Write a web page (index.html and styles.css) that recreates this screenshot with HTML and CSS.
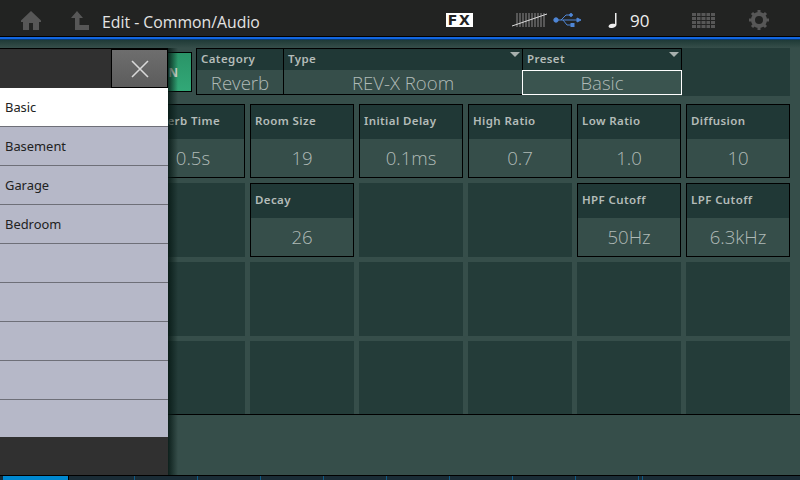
FILE: index.html
```html
<!DOCTYPE html>
<html>
<head>
  <title>Edit - Common/Audio</title>
  <link rel="stylesheet" href="styles.css">
</head>
<body>
  <div class="screen">
    <div class="header">
      <svg class="icon-home" width="20" height="20" viewBox="0 0 20 20"><path d="M10 1 L20 10.5 V12 H18 V20 H12 V13 H8 V20 H2 V12 H0 V10.5 Z" fill="#575757"/></svg>
      <svg class="icon-back" width="18" height="19" viewBox="0 0 18 19"><path d="M6 0 L12 7 H8.5 V14 H18 V19 H4 V7 H0 Z" fill="#575757"/></svg>
      <span class="title">Edit - Common/Audio</span>
      <span class="fx">FX</span>
      <svg class="icon-keys" width="36" height="16" viewBox="0 0 36 16">
        <path d="M5 1V15M8 1V15M11 1V15M14 1V15M17 1V15M20 1V15M23 1V15M26 1V15M29 1V15M32 1V15" stroke="#575757" stroke-width="2"/>
        <path d="M0 14 L35 2" stroke="#ddd" stroke-width="1"/>
      </svg>
      <svg class="icon-usb" width="29" height="14" viewBox="0 0 29 14">
        <g fill="#4f86d6" stroke="#4f86d6">
          <circle cx="3" cy="7" r="2.2"/>
          <path d="M3 7H25" fill="none"/>
          <path d="M8 7 L13 2 H17 M10 7 L14 12 H18" fill="none"/>
          <circle cx="18" cy="2" r="1.4"/>
          <rect x="18" y="10.5" width="3" height="3"/>
          <path d="M24 5 L28 7 L24 9 Z"/>
        </g>
      </svg>
      <svg class="icon-note" width="9" height="15" viewBox="0 0 9 15"><path d="M7 0 H8.5 V11.5 C8.5 13.5 6 15 3 15 C0.5 15 0 13.5 1 12.3 C2.2 11 5 10.6 7 11 Z" fill="#eee"/></svg>
      <span class="tempo">90</span>
      <svg class="icon-grid" width="23" height="15" viewBox="0 0 23 15">
        <path d="M0 1.5H23M0 5.5H23M0 9.5H23M0 13.5H23" stroke="#575757" stroke-width="3"/>
        <path d="M4.5 0V15M9 0V15M14 0V15M18.5 0V15" stroke="#222" stroke-width="1"/>
      </svg>
      <svg class="icon-gear" width="20" height="20" viewBox="0 0 20 20">
        <circle cx="10" cy="10" r="6" fill="none" stroke="#575757" stroke-width="4"/>
        <path d="M10 0V20M0 10H20M3 3L17 17M17 3L3 17" stroke="#575757" stroke-width="3" stroke-dasharray="3 14 3"/>
      </svg>
    </div>
    <div class="accent"></div>

    <div class="main">
      <div class="top-row">
        <div class="on-wrap"><button class="on-btn">ON</button></div>
        <div class="field field-category">
          <div class="label">Category</div>
          <div class="value">Reverb</div>
        </div>
        <div class="field field-type">
          <div class="label">Type<span class="arrow"></span></div>
          <div class="value">REV-X Room</div>
        </div>
        <div class="field field-preset">
          <div class="label">Preset<span class="arrow"></span></div>
          <div class="value selected">Basic</div>
        </div>
        <div class="field-empty"></div>
      </div>

      <div class="grid">
        <div class="cell"><div class="label">Reverb Time</div><div class="value">0.5s</div></div>
        <div class="cell"><div class="label">Room Size</div><div class="value">19</div></div>
        <div class="cell"><div class="label">Initial Delay</div><div class="value">0.1ms</div></div>
        <div class="cell"><div class="label">High Ratio</div><div class="value">0.7</div></div>
        <div class="cell"><div class="label">Low Ratio</div><div class="value">1.0</div></div>
        <div class="cell"><div class="label">Diffusion</div><div class="value">10</div></div>

        <div class="empty"></div>
        <div class="cell"><div class="label">Decay</div><div class="value">26</div></div>
        <div class="empty"></div>
        <div class="empty"></div>
        <div class="cell"><div class="label">HPF Cutoff</div><div class="value">50Hz</div></div>
        <div class="cell"><div class="label">LPF Cutoff</div><div class="value">6.3kHz</div></div>

        <div class="empty"></div><div class="empty"></div><div class="empty"></div>
        <div class="empty"></div><div class="empty"></div><div class="empty"></div>

        <div class="empty"></div><div class="empty"></div><div class="empty"></div>
        <div class="empty"></div><div class="empty"></div><div class="empty"></div>
      </div>

      <div class="strip"></div>
    </div>

    <div class="tabs">
      <div class="tab active"></div>
      <div class="tab"></div><div class="tab"></div><div class="tab"></div><div class="tab"></div>
      <div class="tab"></div><div class="tab"></div><div class="tab"></div><div class="tab"></div>
      <div class="tab"></div><div class="tab tab-small"></div><div class="tab tab-last"></div>
    </div>

    <div class="panel">
      <div class="panel-top">
        <button class="close">
          <svg width="18" height="18" viewBox="0 0 18 18"><path d="M1 1L17 17M17 1L1 17" stroke="#d8d8d8" stroke-width="1.6"/></svg>
        </button>
      </div>
      <ul class="menu">
        <li class="current">Basic</li>
        <li>Basement</li>
        <li>Garage</li>
        <li>Bedroom</li>
        <li></li>
        <li></li>
        <li></li>
        <li></li>
        <li></li>
      </ul>
    </div>
  </div>
</body>
</html>
```

FILE: styles.css
```css
* {
  box-sizing: border-box;
}

html, body {
  margin: 0;
  padding: 0;
}

body {
  width: 800px;
  height: 480px;
  overflow: hidden;
  font-family: "Open Sans", sans-serif;
  background: #364e4a;
}

.screen {
  position: relative;
  width: 800px;
  height: 480px;
  display: flex;
  flex-direction: column;
}

.header {
  display: flex;
  align-items: center;
  height: 37px;
  padding-top: 4px;
  background: #222322;
  border-bottom: 1px solid #000;
  flex-shrink: 0;
}

.icon-home { margin-left: 21px; }
.icon-back { margin-left: 30px; }

.title {
  margin-left: 13px;
  padding-top: 3px;
  width: 344px;
  color: #e4e4e4;
  font-size: 15.8px;
  white-space: nowrap;
}

.fx {
  width: 27px;
  height: 14px;
  background: #fff;
  color: #222;
  font-family: "DejaVu Sans", sans-serif;
  font-weight: bold;
  font-size: 14px;
  line-height: 14px;
  text-align: center;
  letter-spacing: 1.5px;
}

.icon-keys { margin-left: 39px; }
.icon-usb { margin-left: 5px; }
.icon-note { margin-left: 26px; }

.tempo {
  margin-left: 13px;
  width: 20px;
  color: #eee;
  font-size: 17px;
}

.icon-grid { margin-left: 42px; }
.icon-gear { margin-left: 34px; }

.accent {
  height: 3px;
  background: #1266e0;
  border-bottom: 1px solid #0a3a70;
  flex-shrink: 0;
}

.main {
  flex: 1;
  display: flex;
  flex-direction: column;
  background: linear-gradient(#1f3a37, #364e4a 8px);
  padding-top: 8px;
  min-height: 0;
}

.top-row {
  display: flex;
  height: 48px;
  padding-left: 141px;
}

.on-wrap {
  width: 55px;
  padding: 4px 4px 4px 0;
}

.on-btn {
  display: block;
  width: 100%;
  height: 100%;
  padding: 0 0 0 4px;
  background: linear-gradient(#2a9468, #32a877);
  border: 1px solid #000;
  color: #dcebe3;
  font-family: "Noto Sans", sans-serif;
  font-weight: bold;
  font-size: 12px;
}

.field {
  display: flex;
  flex-direction: column;
  height: 47px;
  border: 1px solid #000;
  border-right: 0;
}

.field-category { width: 87px; }
.field-type { width: 239px; }
.field-preset { width: 160px; border-right: 1px solid #000; border-bottom: 0; }

.field-empty {
  width: 108px;
  background: #243c39;
}

.label {
  position: relative;
  flex-shrink: 0;
  background: #203836;
  color: #b4bcb9;
  font-family: "Noto Sans", sans-serif;
  font-weight: 600;
  font-size: 11.5px;
  letter-spacing: 0.4px;
  white-space: nowrap;
  overflow: hidden;
}

.field .label {
  height: 21px;
  line-height: 20px;
  padding-left: 4px;
}

.value {
  flex: 1;
  min-height: 0;
  background: #364e4a;
  color: #b0bab7;
  text-align: center;
  font-size: 18.6px;
  font-weight: 300;
}

.field .value {
  line-height: 25px;
}

.field .value.selected {
  border: 1px solid #fff;
  line-height: 23px;
  background: #3a544f;
  margin-left: -1px;
  margin-right: -1px;
}

.arrow {
  position: absolute;
  right: 2px;
  top: 3px;
  width: 0;
  height: 0;
  border-left: 5px solid transparent;
  border-right: 5px solid transparent;
  border-top: 5px solid #a8b0ae;
}

.grid {
  display: grid;
  grid-template-columns: repeat(6, 104px);
  grid-auto-rows: 74px;
  gap: 5px;
  padding-left: 141px;
  margin-top: 8px;
}

.cell {
  display: flex;
  flex-direction: column;
  border: 1px solid #000;
}

.cell .label {
  height: 34px;
  line-height: 31px;
  padding-left: 4px;
}

.cell .value {
  line-height: 37px;
}

.empty {
  background: #243c39;
}

.strip {
  flex: 1;
  margin-top: -1px;
  background: #364e4a;
  border-top: 1px solid #000;
  border-bottom: 1px solid #000;
  position: relative;
}

.tabs {
  display: flex;
  height: 4px;
  background: #1a2c36;
  flex-shrink: 0;
  padding-left: 3px;
}

.tab {
  width: 63px;
  border-right: 1px solid #0f5a86;
}

.tab.active {
  width: 66px;
  background: #0088d0;
  border-right: 1px solid #000;
  margin-right: 3px;
}

.tab-small { width: 4px; }
.tab-last { border-right: 0; }

.panel {
  position: absolute;
  left: 0;
  top: 48px;
  width: 168px;
  height: 427px;
  background: #303030;
}

.panel::after {
  content: "";
  position: absolute;
  left: 100%;
  top: 0;
  bottom: 0;
  width: 10px;
  background: linear-gradient(to right, rgba(6, 24, 20, 0.85), rgba(6, 24, 20, 0));
}

.panel-top {
  display: flex;
  justify-content: flex-end;
  height: 40px;
  border-top: 1px solid #000;
}

.close {
  width: 57px;
  height: 39px;
  padding: 0;
  background: linear-gradient(#6e6e6e, #5c5c5c);
  border: 1px solid #000;
  display: flex;
  align-items: center;
  justify-content: center;
}

.menu {
  list-style: none;
  margin: 0;
  padding: 0;
}

.menu li {
  height: 39px;
  line-height: 39px;
  padding-left: 5px;
  background: #b6b8c8;
  border-bottom: 1px solid #6e6f78;
  color: #222;
  font-family: "Noto Sans", sans-serif;
  font-size: 12.9px;
}

.menu li:last-child {
  border-bottom: 0;
  height: 37px;
}

.menu li.current {
  background: #fff;
}
```
